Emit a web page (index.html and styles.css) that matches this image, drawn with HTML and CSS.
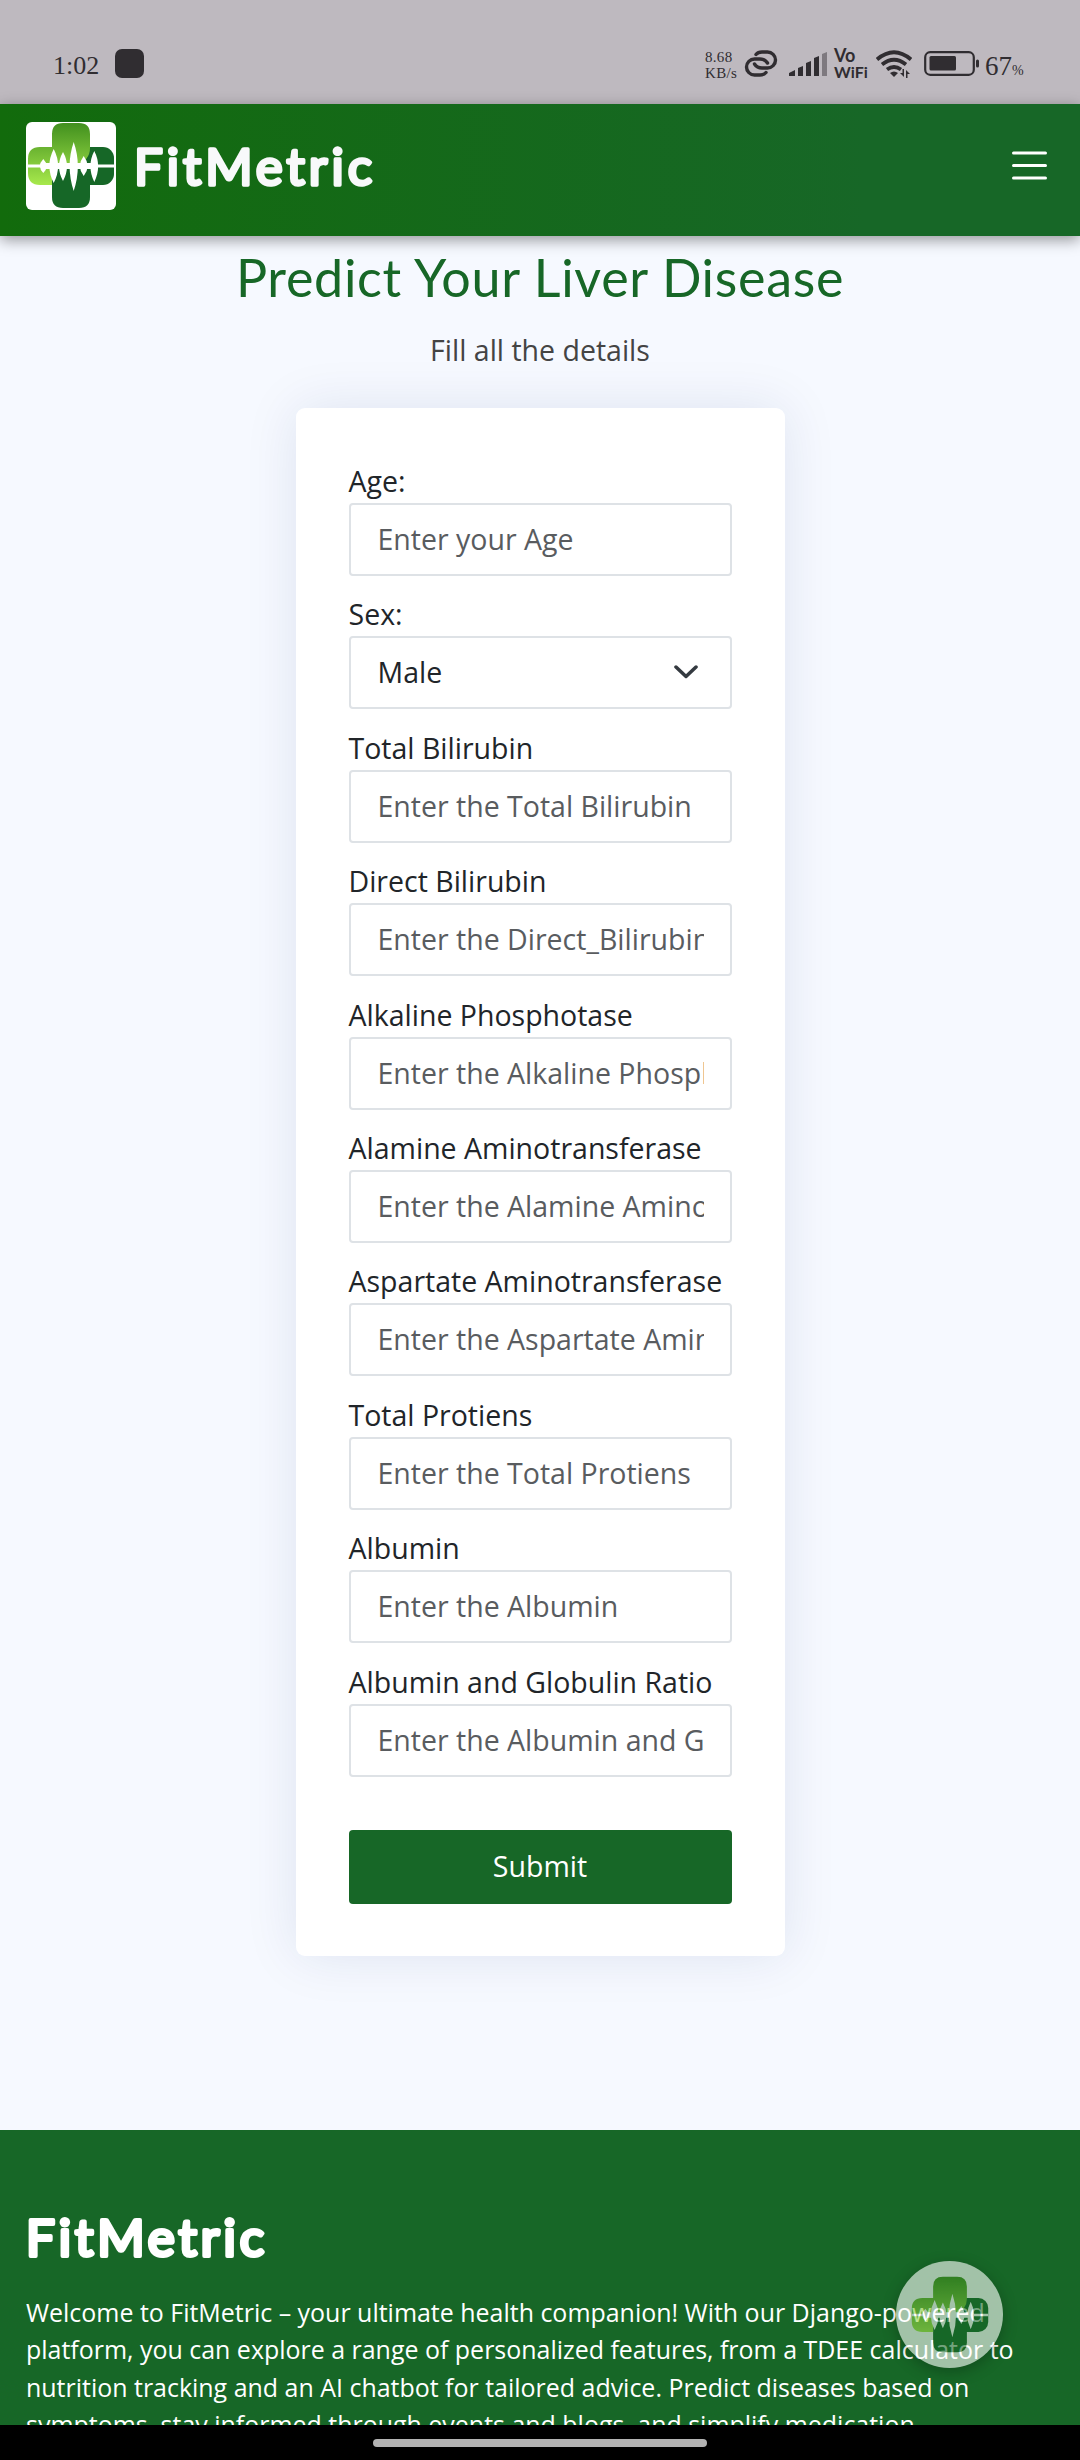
FILE: index.html
```html
<!DOCTYPE html>
<html lang="en">
<head>
<meta charset="utf-8">
<title>FitMetric</title>
<link rel="stylesheet" href="styles.css">
</head>
<body>
<svg class="defs" width="0" height="0" aria-hidden="true">
  <defs>
    <linearGradient id="leaf" gradientUnits="userSpaceOnUse" x1="0" y1="2" x2="0" y2="64">
      <stop offset="0" stop-color="#43911f"/><stop offset="1" stop-color="#a9ea4d"/>
    </linearGradient>
    <symbol id="logo" viewBox="0 0 90 88">
      <rect x="46" y="25" width="42" height="38" rx="11" fill="#166727"/>
      <path d="M26 40h38v35q0 11-11 11H37q-11 0-11-11z" fill="#166727"/>
      <path d="M26 25h-12q-12 0-12 12v14q0 12 12 12h12V44h24q14-6 14-18V12q0-11-11-11H37q-11 0-11 11z" fill="url(#leaf)"/>
      <path class="wave" d="M2 42.500h86v3H2z"/>
      <path class="wave" d="M12 44l6-3h50l6 3-6 3H18z"/>
      <path class="wave" d="M17.300 37Q24 44 17.300 51Q10.500 44 17.300 37zM27.700 27Q36.500 44 27.700 61Q19 44 27.700 27zM37 30Q45 44 37 59Q29 44 37 30zM47.700 20Q56 44 47.700 69Q39.500 44 47.700 20zM57.700 34Q65.500 44 57.700 54Q50 44 57.700 34zM68.300 29Q76 44 68.300 60Q60.500 44 68.300 29z"/>
    </symbol>
  </defs>
</svg>
<div class="status">
  <div class="status-left"><span class="time">1:02</span><span class="app-dot"></span></div>
  <div class="status-right">
    <div class="speed"><span>8.68</span><span>KB/s</span></div>
    <svg class="link" width="34" height="27" viewBox="0 0 34 27"><g fill="none" stroke="#302d31" stroke-width="3.400" stroke-linecap="round"><path d="M12 4.500Q14 2 18 2h5.500a8 8 0 0 1 0 16H18q-5 0-7.500-4"/><path d="M22 22.500Q20 25 16 25h-5.500a8 8 0 0 1 0-16H16q5 0 7.500 4"/></g></svg>
    <svg class="signal" width="38" height="26" viewBox="0 0 38 26" fill="#302d31"><path d="M0 25v-3l6-3v6zM9 25V17l5-2v10zM17 25V12l5-2v15zM25 25V7l5-2v20z"/><path d="M33 25V3l5-2v24z" opacity=".45"/></svg>
    <div class="vowifi"><span class="vo">Vo</span><span>WiFi</span></div>
    <svg class="wifi" width="36" height="28" viewBox="0 0 36 28"><g fill="none" stroke="#302d31" stroke-width="3.800"><path d="M1 9.500q17-14.500 34 0M6 14.500q12-9.500 24 0M11 19.500q7-5 14 0"/></g><path d="M14 23q4-3 8 0l-4 4zM28 19v8l-4-4h2.500v-4zM30 28v-8l4 4h-2.500v4z" fill="#302d31"/></svg>
    <svg class="battery" width="55" height="25" viewBox="0 0 55 25"><rect x="1.200" y="1.200" width="48.600" height="22.600" rx="5" fill="none" stroke="#302d31" stroke-width="2.200"/><rect x="5.500" y="5" width="26.500" height="14.500" rx="1.500" fill="#302d31"/><rect x="52" y="8.500" width="3" height="8" rx="1.500" fill="#302d31"/></svg>
    <div class="percent">67<small>%</small></div>
  </div>
</div>
<header class="navbar">
  <div class="brand">
    <svg class="brand-logo" viewBox="0 0 90 88"><use href="#logo"/></svg>
    <svg class="wordmark" width="240" height="60" viewBox="0 0 240 60"><text x="0" y="49" textLength="238">FitMetric</text></svg>
  </div>
  <svg class="menu" width="35" height="29" viewBox="0 0 35 29"><path d="M1.500 2h32M1.500 14.500h32M1.500 27h32" stroke="#fff" stroke-width="3" stroke-linecap="round"/></svg>
</header>
<main>
  <h1>Predict Your Liver Disease</h1>
  <p class="lead">Fill all the details</p>
  <form class="card">
    <label>Age:<input type="text" placeholder="Enter your Age"></label>
    <label>Sex:<span class="select">Male<svg width="24" height="14" viewBox="0 0 24 14"><path d="M2 2l10 9.500L22 2" fill="none" stroke="#343a40" stroke-width="3.500" stroke-linecap="round" stroke-linejoin="round"/></svg></span></label>
    <label>Total Bilirubin<input type="text" placeholder="Enter the Total Bilirubin"></label>
    <label>Direct Bilirubin<input type="text" placeholder="Enter the Direct_Bilirubin"></label>
    <label>Alkaline Phosphotase<input type="text" placeholder="Enter the Alkaline Phosphotase"></label>
    <label>Alamine Aminotransferase<input type="text" placeholder="Enter the Alamine Aminotransferase"></label>
    <label>Aspartate Aminotransferase<input type="text" placeholder="Enter the Aspartate Aminotransferase"></label>
    <label>Total Protiens<input type="text" placeholder="Enter the Total Protiens"></label>
    <label>Albumin<input type="text" placeholder="Enter the Albumin"></label>
    <label>Albumin and Globulin Ratio<input type="text" placeholder="Enter the Albumin and Globulin Ratio"></label>
    <button type="button">Submit</button>
  </form>
</main>
<footer>
  <svg class="wordmark footer-mark" width="242" height="60" viewBox="0 0 242 60"><text x="0" y="45" textLength="238">FitMetric</text></svg>
  <p>Welcome to FitMetric – your ultimate health companion! With our Django-powered<br>platform, you can explore a range of personalized features, from a TDEE calculator to<br>nutrition tracking and an AI chatbot for tailored advice. Predict diseases based on<br>symptoms, stay informed through events and blogs, and simplify medication</p>
</footer>
<div class="chat"><svg viewBox="0 0 90 88"><use href="#logo"/></svg></div>
<div class="gesture"><span></span></div>
</body>
</html>
```

FILE: styles.css
```css
* { box-sizing: border-box; }
body { margin: 0; width: 1080px; height: 2460px; overflow: hidden; position: relative; display: flex; flex-direction: column; background: #f6f9ff; color: #212529; font-family: "Open Sans", sans-serif; font-size: 28.5px; }
.defs { position: absolute; }
.wave { fill: #fff; }
.status { height: 104px; flex: none; background: #beb9bf; color: #302d31; display: flex; justify-content: space-between; padding: 0 56px 0 53px; font-family: "Liberation Serif", serif; }
.status-left, .status-right { display: flex; align-items: flex-start; }
.time { font-size: 26px; line-height: 30px; margin-top: 51px; width: 47px; }
.app-dot { width: 29px; height: 29px; margin: 49px 0 0 15px; border-radius: 7px; background: #302d31; }
.speed { display: flex; flex-direction: column; font-size: 15px; line-height: 16px; margin-top: 49px; width: 39px; letter-spacing: .3px; }
.link { margin-top: 50px; }
.signal { margin: 51px 0 0 11px; }
.vowifi { display: flex; flex-direction: column; font: 700 16px/16px "Lato", sans-serif; width: 34px; margin: 46px 0 0 7px; }
.vo { font-size: 18px; line-height: 18px; }
.wifi { margin: 50px 0 0 8px; }
.battery { margin: 51px 0 0 12px; }
.percent { font-size: 27px; line-height: 30px; margin: 51px 0 0 6px; width: 39px; white-space: nowrap; }
.percent small { font-size: 14px; }
.navbar { position: relative; z-index: 1; height: 132px; flex: none; display: flex; align-items: center; justify-content: space-between; padding: 0 33px 8px 26px; background: linear-gradient(90deg, #126b0c, #176727 80%); box-shadow: 0 4px 14px rgba(0,0,0,.4); }
.brand { display: flex; align-items: center; }
.brand-logo { width: 90px; height: 88px; background: #fff; border-radius: 6px; }
.wordmark { margin-left: 18px; overflow: visible; fill: #f8f9fa; font-family: Lato, sans-serif; font-size: 51px; font-weight: 400; stroke: #f8f9fa; stroke-width: 3.4px; stroke-linejoin: round; }
.menu { margin-bottom: 2px; }
main { flex: none; height: 1894px; display: flex; flex-direction: column; align-items: center; }
h1 { margin: 10px 0 0; font: 400 52px/62px Lato, sans-serif; letter-spacing: .7px; color: #176727; }
.lead { margin: 21px 0 0; line-height: 42px; color: #444; }
.card { margin-top: 37px; width: 489px; height: 1548px; padding: 52px 53px; border-radius: 9px; background: #fff; box-shadow: 0 0 53px rgba(1,41,112,.1); display: flex; flex-direction: column; }
label { height: 133.4px; display: block; line-height: 42px; white-space: nowrap; }
input, .select { display: flex; align-items: center; justify-content: space-between; width: 383px; height: 73px; margin-top: 1px; border: 2px solid #dee2e6; border-radius: 4px; padding: 0 26px 1px 27px; background: #fff; color: #212529; font: inherit; outline: 0; }
.select { padding-right: 32px; }
input::placeholder { color: #595c5f; opacity: 1; }
button { margin-top: auto; height: 74px; border: 0; border-radius: 4px; padding: 0 0 2px; background: #176727; color: #fff; font: inherit; }
footer { height: 295px; flex: none; overflow: hidden; background: #176727; color: #fff; padding: 81px 26px 0; }
.footer-mark { display: block; margin-left: 0; fill: #fff; stroke: #fff; stroke-width: 4px; }
footer p { margin: 23px 0 0; font-size: 24.96px; line-height: 37.4px; white-space: nowrap; }
.chat { position: absolute; left: 896px; top: 2261px; width: 107px; height: 107px; border-radius: 50%; background: #fff; opacity: .6; display: grid; place-items: center; box-shadow: 0 4px 14px rgba(0,0,0,.4); }
.chat svg { width: 80px; height: 80px; }
.gesture { flex: none; height: 35px; background: #000; display: flex; justify-content: center; padding-top: 14px; }
.gesture span { width: 334px; height: 8px; border-radius: 4px; background: #b3b3b3; }
```
